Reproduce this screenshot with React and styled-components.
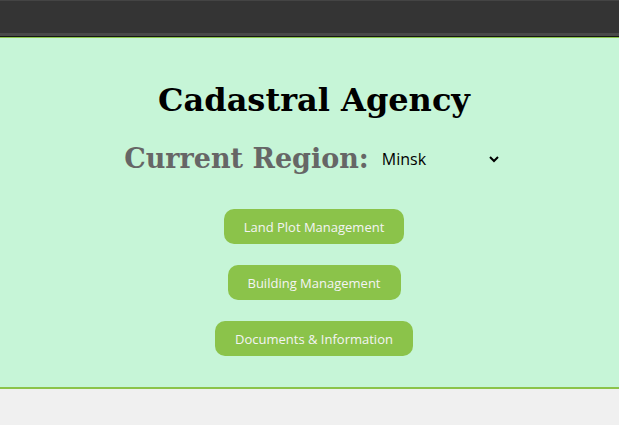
import React, { useState } from "react";
import styled, { createGlobalStyle } from "styled-components";

const Global = createGlobalStyle`
  html, body { margin: 0; padding: 0; background: #f0f0f0; }
  body { font-family: "Open Sans", "DejaVu Sans", sans-serif; }
`;

const TopBar = styled.header`
  height: 32px;
  background: #343434;
  border-top: 1px solid #444;
  border-bottom: 4px solid #4a4a4a;
`;

const Panel = styled.main`
  background: #c6f5d7;
  border-top: 1px solid #8bc34a;
  border-bottom: 2px solid #8bc34a;
  box-shadow: 0 -1px 0 #151515, 0 3px 8px rgba(0, 0, 0, 0.1);
  padding: 44px 0 31px 9px;
  display: flex;
  flex-direction: column;
  align-items: center;
`;

const Title = styled.h1`
  margin: 0;
  font-family: "DejaVu Serif", serif;
  font-weight: bold;
  font-size: 32px;
  line-height: 37px;
  color: #000;
`;

const RegionRow = styled.div`
  margin-top: 24px;
  display: flex;
  align-items: center;
  gap: 5px;
  margin-right: 2px;
`;

const RegionLabel = styled.h2`
  margin: 0;
  font-family: "DejaVu Serif", serif;
  font-weight: bold;
  font-size: 27px;
  line-height: 32px;
  color: #666;
`;

const RegionSelect = styled.select`
  width: 128px;
  font-family: "Open Sans", "DejaVu Sans", sans-serif;
  font-size: 16px;
  color: #000;
  background: transparent;
  border: none;
  padding: 2px 4px;
`;

const Buttons = styled.nav`
  margin-top: 34px;
  display: flex;
  flex-direction: column;
  align-items: center;
  gap: 21px;
`;

const ActionButton = styled.button`
  height: 35px;
  padding: 0 20px;
  background: #8bc34a;
  color: #f4f4f4;
  border: none;
  border-radius: 10px;
  font-family: "Open Sans", "DejaVu Sans", sans-serif;
  font-size: 13px;
  cursor: pointer;
`;

export default function App() {
  const [region, setRegion] = useState("Minsk");
  return (
    <>
      <Global />
      <TopBar />
      <Panel>
        <Title>Cadastral Agency</Title>
        <RegionRow>
          <RegionLabel>Current Region:</RegionLabel>
          <RegionSelect value={region} onChange={(e) => setRegion(e.target.value)}>
            <option>Minsk</option>
            <option>Brest</option>
            <option>Gomel</option>
            <option>Grodno</option>
            <option>Mogilev</option>
            <option>Vitebsk</option>
          </RegionSelect>
        </RegionRow>
        <Buttons>
          <ActionButton>Land Plot Management</ActionButton>
          <ActionButton>Building Management</ActionButton>
          <ActionButton>Documents &amp; Information</ActionButton>
        </Buttons>
      </Panel>
    </>
  );
}
